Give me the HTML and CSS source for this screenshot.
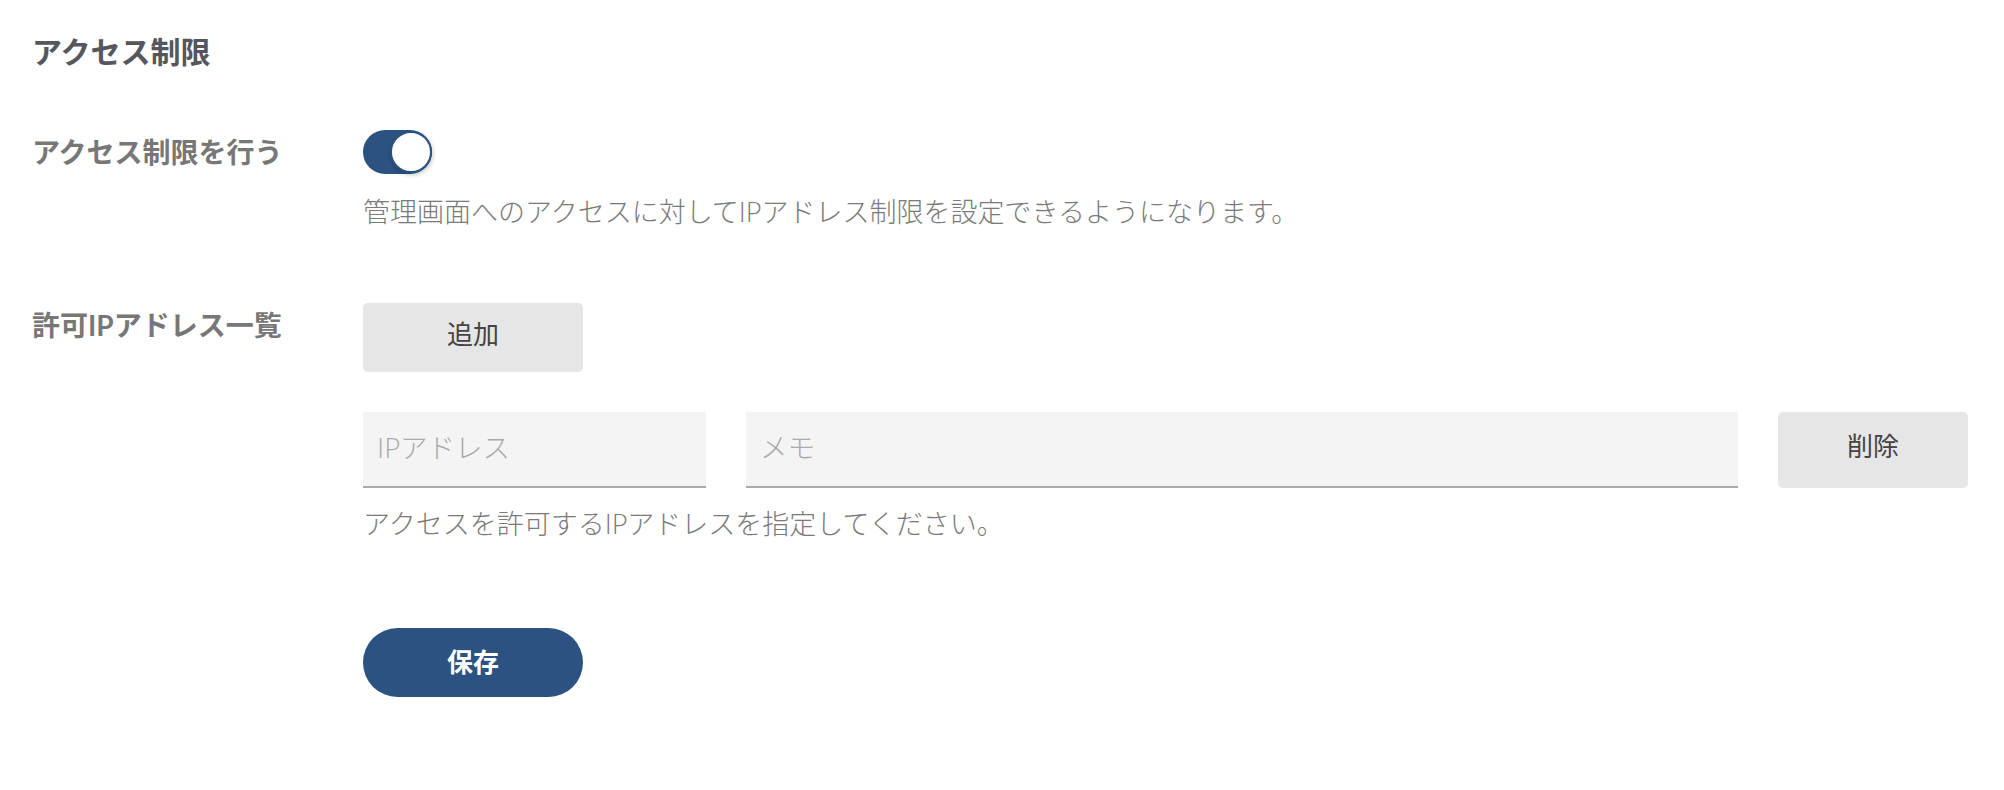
FILE: index.html
```html
<!DOCTYPE html>
<html lang="ja">
<head>
<meta charset="utf-8">
<title>アクセス制限</title>
<link rel="stylesheet" href="styles.css">
</head>
<body>
<main class="page">
  <h2 class="title">アクセス制限</h2>

  <section class="row row-toggle">
    <div class="label">アクセス制限を行う</div>
    <div class="content">
      <div class="toggle is-on" role="switch" aria-checked="true">
        <span class="toggle-knob"></span>
      </div>
      <p class="help help-toggle">管理画面へのアクセスに対してIPアドレス制限を設定できるようになります。</p>
    </div>
  </section>

  <section class="row row-ips">
    <div class="label">許可IPアドレス一覧</div>
    <div class="content">
      <button class="btn btn-gray btn-add" type="button">追加</button>
      <div class="ip-row">
        <input class="field field-ip" type="text" placeholder="IPアドレス">
        <input class="field field-memo" type="text" placeholder="メモ">
        <button class="btn btn-gray btn-delete" type="button">削除</button>
      </div>
      <p class="help help-ip">アクセスを許可するIPアドレスを指定してください。</p>
      <button class="btn btn-save" type="button">保存</button>
    </div>
  </section>
</main>
</body>
</html>
```

FILE: styles.css
```css
* { box-sizing: border-box; }

html, body {
  margin: 0;
  background: #ffffff;
}

body {
  font-family: "Lato", "Noto Sans CJK JP", sans-serif;
  color: #444;
}

.page {
  padding: 29px 36px 0 32px;
}

.title {
  margin: 0;
  font-size: 30px;
  line-height: 45px;
  font-weight: 700;
  color: #55565e;
}

.row {
  display: grid;
  grid-template-columns: 331px 1fr;
}

.row-toggle {
  margin-top: 56px;
}

.row-ips {
  margin-top: 71px;
}

.label {
  padding-top: 2px;
  font-size: 28px;
  line-height: 40px;
  font-weight: 700;
  color: #777777;
}

.content {
  display: flex;
  flex-direction: column;
  align-items: flex-start;
}

.toggle {
  position: relative;
  width: 69px;
  height: 44px;
  border-radius: 22px;
  background: #2b5281;
}

.toggle-knob {
  position: absolute;
  top: 1px;
  right: 0;
  width: 42px;
  height: 42px;
  border-radius: 50%;
  background: #ffffff;
  border: 2px solid #2b5281;
  box-shadow: 1px 2px 4px rgba(0, 0, 0, 0.22);
}

.help {
  margin: 0;
  font-size: 27px;
  line-height: 40px;
  font-weight: 300;
  color: #7a7a7a;
}

.help-toggle {
  margin-top: 18px;
}

.btn {
  font-family: inherit;
  border: 0;
  cursor: pointer;
  padding: 0;
}

.btn-gray {
  background: #e6e6e6;
  color: #444;
  font-size: 26px;
  font-weight: 400;
  border-radius: 5px;
}

.btn-add {
  width: 220px;
  height: 69px;
  padding-bottom: 10px;
}

.ip-row {
  display: flex;
  gap: 40px;
  width: 100%;
  margin-top: 40px;
}

.field {
  height: 76px;
  background: #f4f4f4;
  border: 0;
  border-bottom: 2px solid #aaaaaa;
  padding: 0 14px 4px;
  font-family: inherit;
  font-size: 27.5px;
  font-weight: 300;
  color: #444;
  outline: none;
}

.field::placeholder {
  color: #aaaaaa;
}

.field-ip {
  width: 343px;
  flex: 0 0 343px;
}

.field-memo {
  flex: 1 1 auto;
  min-width: 0;
}

.btn-delete {
  width: 190px;
  flex: 0 0 190px;
  height: 76px;
  padding-bottom: 12px;
}

.help-ip {
  margin-top: 16px;
}

.btn-save {
  margin-top: 84px;
  width: 220px;
  height: 69px;
  border-radius: 35px;
  background: #2b5281;
  color: #ffffff;
  font-size: 26px;
  font-weight: 700;
  padding-bottom: 5px;
}
```
